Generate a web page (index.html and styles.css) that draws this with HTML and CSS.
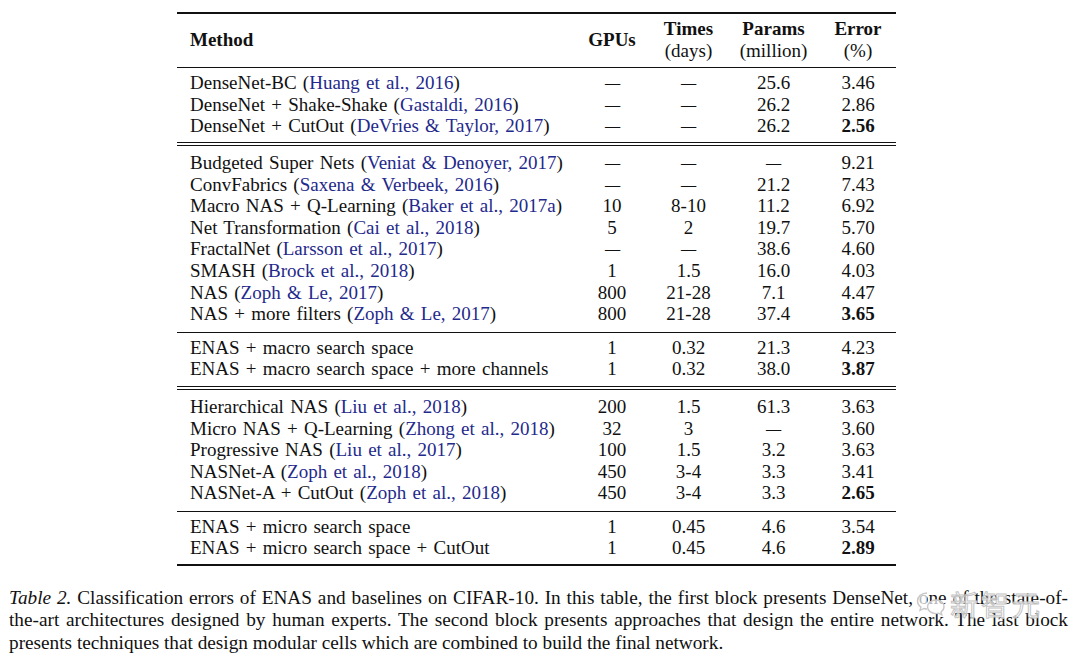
FILE: index.html
```html
<!DOCTYPE html>
<html>
<head>
<meta charset="utf-8">
<link rel="stylesheet" href="styles.css">
</head>
<body>
<div class="page">
  <table class="results">
    <colgroup>
      <col class="c-method"><col class="c-gpu"><col class="c-time"><col class="c-param"><col class="c-err">
    </colgroup>
    <thead>
      <tr>
        <th class="method">Method</th>
        <th>GPUs</th>
        <th>Times<br><span class="unit">(days)</span></th>
        <th>Params<br><span class="unit">(million)</span></th>
        <th>Error<br><span class="unit">(%)</span></th>
      </tr>
    </thead>
    <tbody class="blk single">
      <tr><td class="method">DenseNet-BC (<span class="cite">Huang et al., 2016</span>)</td><td><span class="dash">—</span></td><td><span class="dash">—</span></td><td>25.6</td><td>3.46</td></tr>
      <tr><td class="method">DenseNet + Shake-Shake (<span class="cite">Gastaldi, 2016</span>)</td><td><span class="dash">—</span></td><td><span class="dash">—</span></td><td>26.2</td><td>2.86</td></tr>
      <tr><td class="method">DenseNet + CutOut (<span class="cite">DeVries &amp; Taylor, 2017</span>)</td><td><span class="dash">—</span></td><td><span class="dash">—</span></td><td>26.2</td><td class="best">2.56</td></tr>
    </tbody>
    <tbody class="blk double">
      <tr><td class="method">Budgeted Super Nets (<span class="cite">Veniat &amp; Denoyer, 2017</span>)</td><td><span class="dash">—</span></td><td><span class="dash">—</span></td><td><span class="dash">—</span></td><td>9.21</td></tr>
      <tr><td class="method">ConvFabrics (<span class="cite">Saxena &amp; Verbeek, 2016</span>)</td><td><span class="dash">—</span></td><td><span class="dash">—</span></td><td>21.2</td><td>7.43</td></tr>
      <tr><td class="method">Macro NAS + Q-Learning (<span class="cite">Baker et al., 2017a</span>)</td><td>10</td><td>8-10</td><td>11.2</td><td>6.92</td></tr>
      <tr><td class="method">Net Transformation (<span class="cite">Cai et al., 2018</span>)</td><td>5</td><td>2</td><td>19.7</td><td>5.70</td></tr>
      <tr><td class="method">FractalNet (<span class="cite">Larsson et al., 2017</span>)</td><td><span class="dash">—</span></td><td><span class="dash">—</span></td><td>38.6</td><td>4.60</td></tr>
      <tr><td class="method">SMASH (<span class="cite">Brock et al., 2018</span>)</td><td>1</td><td>1.5</td><td>16.0</td><td>4.03</td></tr>
      <tr><td class="method">NAS (<span class="cite">Zoph &amp; Le, 2017</span>)</td><td>800</td><td>21-28</td><td>7.1</td><td>4.47</td></tr>
      <tr><td class="method">NAS + more filters (<span class="cite">Zoph &amp; Le, 2017</span>)</td><td>800</td><td>21-28</td><td>37.4</td><td class="best">3.65</td></tr>
    </tbody>
    <tbody class="blk single mid">
      <tr><td class="method">ENAS + macro search space</td><td>1</td><td>0.32</td><td>21.3</td><td>4.23</td></tr>
      <tr><td class="method">ENAS + macro search space + more channels</td><td>1</td><td>0.32</td><td>38.0</td><td class="best">3.87</td></tr>
    </tbody>
    <tbody class="blk double">
      <tr><td class="method">Hierarchical NAS (<span class="cite">Liu et al., 2018</span>)</td><td>200</td><td>1.5</td><td>61.3</td><td>3.63</td></tr>
      <tr><td class="method">Micro NAS + Q-Learning (<span class="cite">Zhong et al., 2018</span>)</td><td>32</td><td>3</td><td><span class="dash">—</span></td><td>3.60</td></tr>
      <tr><td class="method">Progressive NAS (<span class="cite">Liu et al., 2017</span>)</td><td>100</td><td>1.5</td><td>3.2</td><td>3.63</td></tr>
      <tr><td class="method">NASNet-A (<span class="cite">Zoph et al., 2018</span>)</td><td>450</td><td>3-4</td><td>3.3</td><td>3.41</td></tr>
      <tr><td class="method">NASNet-A + CutOut (<span class="cite">Zoph et al., 2018</span>)</td><td>450</td><td>3-4</td><td>3.3</td><td class="best">2.65</td></tr>
    </tbody>
    <tbody class="blk single last">
      <tr><td class="method">ENAS + micro search space</td><td>1</td><td>0.45</td><td>4.6</td><td>3.54</td></tr>
      <tr><td class="method">ENAS + micro search space + CutOut</td><td>1</td><td>0.45</td><td>4.6</td><td class="best">2.89</td></tr>
    </tbody>
  </table>

  <div class="caption">
    <div class="line just"><em>Table 2.</em> Classification errors of ENAS and baselines on CIFAR-10. In this table, the first block presents DenseNet, one of the state-of-</div>
    <div class="line just">the-art architectures designed by human experts. The second block presents approaches that design the entire network. The last block</div>
    <div class="line">presents techniques that design modular cells which are combined to build the final network.</div>
  </div>

  <div class="watermark">
    <svg class="wm-icon" width="30" height="26" viewBox="0 0 30 26">
      <path d="M11 2C5.5 2 1.5 5.6 1.5 10c0 2.5 1.3 4.6 3.4 6.1L4 19.5l3.8-2c1 .3 2.1.5 3.2.5" fill="rgba(255,255,255,0.7)" stroke="#c8c8c8" stroke-width="1.4"/>
      <path d="M20 9c-4.7 0-8.5 3-8.5 6.8s3.8 6.8 8.5 6.8c.9 0 1.8-.1 2.6-.4l3.2 1.7-.8-2.9c1.8-1.2 3-3.1 3-5.2C28.5 12 24.7 9 20 9z" fill="rgba(255,255,255,0.7)" stroke="#c8c8c8" stroke-width="1.4"/>
    </svg>
    <span class="wm-text">新智元</span>
  </div>
</div>
</body>
</html>
```

FILE: styles.css
```css
html, body {
  margin: 0;
  padding: 0;
  background: #ffffff;
}

.page {
  position: relative;
  width: 1080px;
  height: 663px;
  font-family: "Liberation Serif", "Times New Roman", serif;
  color: #111111;
  overflow: hidden;
}

.results {
  margin: 12px 0 0 177px;
  width: 719px;
  border-collapse: collapse;
  font-size: 19px;
  line-height: 21.6px;
  border-top: 2px solid #111;
  border-bottom: 2px solid #111;
}

.c-method { width: 397px; }
.c-gpu { width: 76px; }
.c-time { width: 77px; }
.c-param { width: 93px; }
.c-err { width: 76px; }

.results th,
.results td {
  padding: 0;
  text-align: center;
  font-weight: normal;
  white-space: nowrap;
}

.results th {
  font-weight: bold;
  padding: 4px 0 6px;
  vertical-align: middle;
}

.results th .unit {
  font-weight: normal;
}

.results .method {
  text-align: left;
  padding-left: 13px;
}

.results td.method {
  word-spacing: 1.5px;
}

.results thead {
  border-bottom: 1px solid #111;
}

.blk.double {
  border-top: 4px double #111;
}

.blk.single {
  border-top: 1px solid #111;
}

.blk tr:first-child td { padding-top: 4px; }
.blk tr:last-child td { padding-bottom: 5px; }
.blk.double tr:first-child td { padding-top: 6px; }
.blk.double tr:last-child td { padding-bottom: 7px; }
.blk.mid tr:last-child td { padding-bottom: 6px; }

.dash {
  display: inline-block;
  transform: scaleX(0.8);
}

.cite {
  color: #1f2a8c;
}

.results td.best {
  font-weight: bold;
}

.caption {
  margin: 21px 0 0 9px;
  width: 1059px;
  font-size: 19.25px;
  line-height: 22.4px;
  color: #111;
}

.caption .line {
  white-space: nowrap;
}

.caption .line.just {
  text-align: justify;
  text-align-last: justify;
  white-space: normal;
}

.watermark {
  position: absolute;
  left: 916px;
  top: 586px;
  display: flex;
  align-items: center;
  gap: 4px;
}

.wm-text {
  font-family: "Noto Sans CJK SC", sans-serif;
  font-size: 28px;
  line-height: 36px;
  color: rgba(255, 255, 255, 0.7);
  -webkit-text-stroke: 1px #c4c4c4;
  letter-spacing: 3px;
}
```
